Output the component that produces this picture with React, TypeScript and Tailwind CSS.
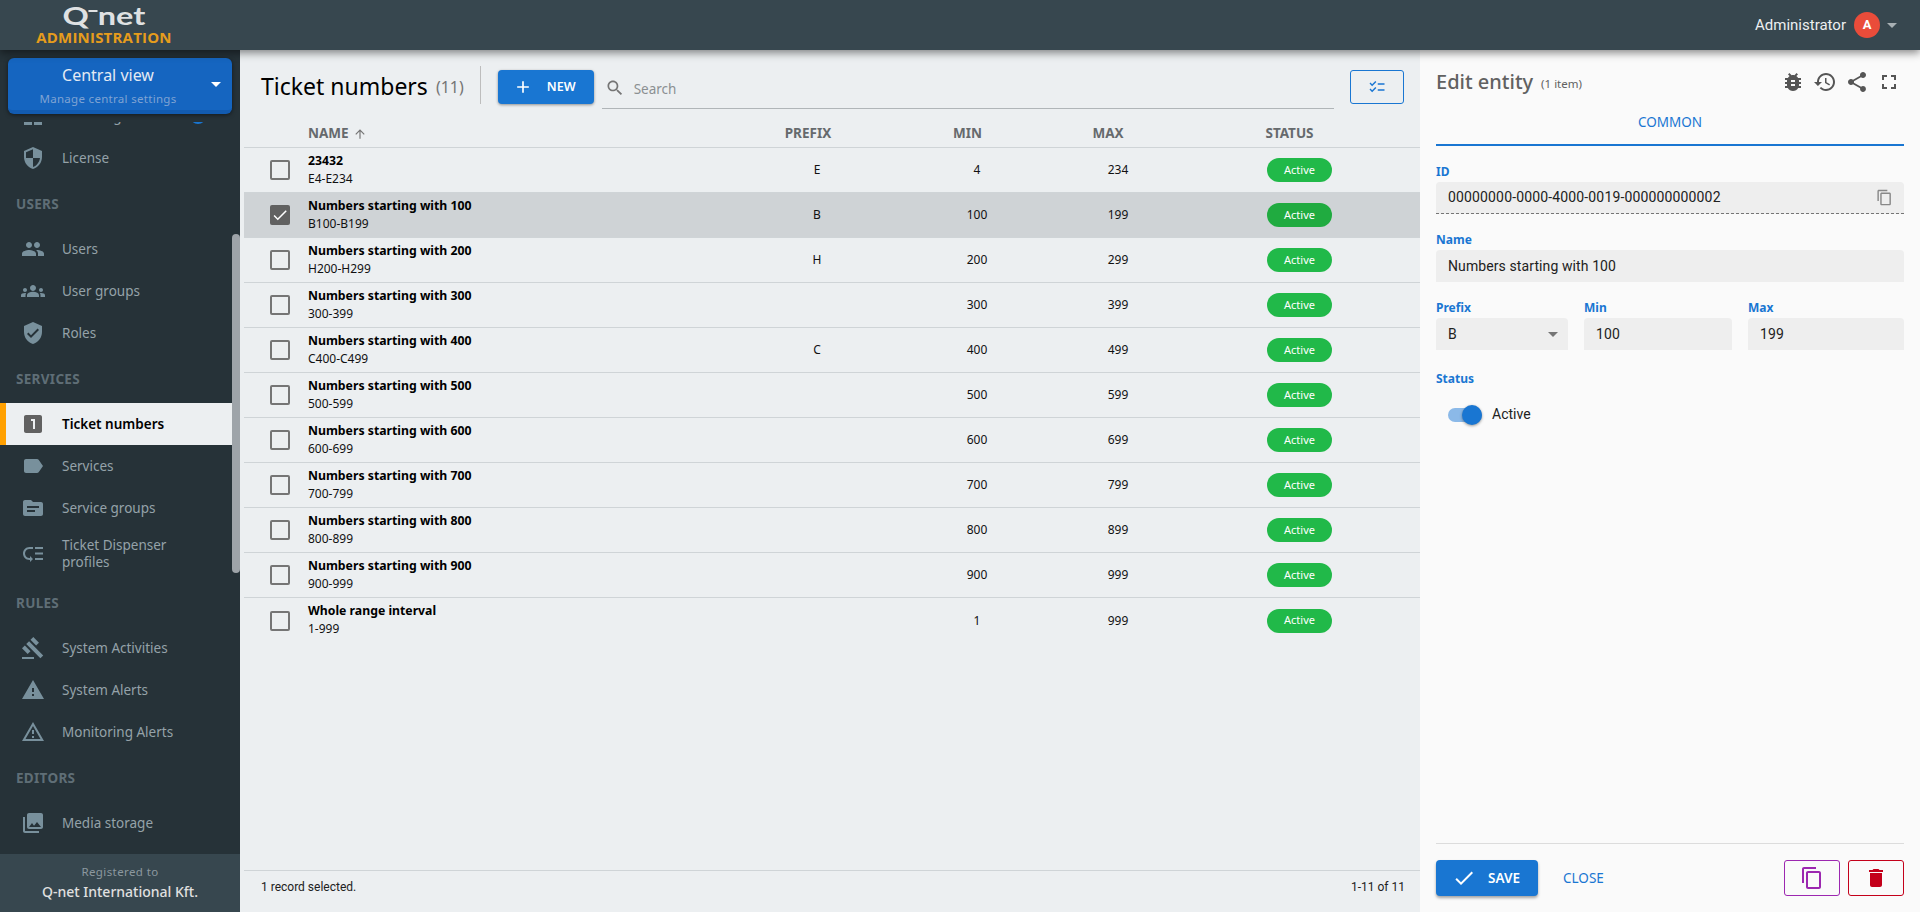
import React from 'react';

const ubuntu = "font-['Noto_Sans',sans-serif]";

const paths: Record<string, string> = {
  dashboard: 'M3 13h8V3H3v10zm0 8h8v-6H3v6zm10 0h8V11h-8v10zm0-18v6h8V3h-8z',
  security: 'M12 1L3 5v6c0 5.55 3.84 10.74 9 12 5.16-1.26 9-6.45 9-12V5l-9-4zm0 10.99h7c-.53 4.12-3.28 7.79-7 8.94V12H5V6.3l7-3.11v8.8z',
  people: 'M16 11c1.66 0 2.99-1.34 2.99-3S17.66 5 16 5c-1.66 0-3 1.34-3 3s1.34 3 3 3zm-8 0c1.66 0 2.99-1.34 2.99-3S9.66 5 8 5C6.34 5 5 6.34 5 8s1.34 3 3 3zm0 2c-2.33 0-7 1.17-7 3.5V19h14v-2.5c0-2.33-4.67-3.5-7-3.5zm8 0c-.29 0-.62.02-.97.05 1.16.84 1.97 1.97 1.97 3.45V19h6v-2.5c0-2.33-4.67-3.5-7-3.5z',
  groups: 'M12 12.75c1.63 0 3.07.39 4.24.9 1.08.48 1.76 1.56 1.76 2.73V18H6v-1.61c0-1.18.68-2.26 1.76-2.73 1.17-.52 2.61-.91 4.24-.91zM4 13c1.1 0 2-.9 2-2s-.9-2-2-2-2 .9-2 2 .9 2 2 2zm1.13 1.1c-.37-.06-.74-.1-1.13-.1-.99 0-1.93.21-2.78.58C.48 14.9 0 15.62 0 16.43V18h4.5v-1.61c0-.83.23-1.61.63-2.29zM20 13c1.1 0 2-.9 2-2s-.9-2-2-2-2 .9-2 2 .9 2 2 2zm4 3.43c0-.81-.48-1.53-1.22-1.85-.85-.37-1.79-.58-2.78-.58-.39 0-.76.04-1.13.1.4.68.63 1.46.63 2.29V18H24v-1.57zM12 6c1.66 0 3 1.34 3 3s-1.34 3-3 3-3-1.34-3-3 1.34-3 3-3z',
  verified: 'M12 1L3 5v6c0 5.55 3.84 10.74 9 12 5.16-1.26 9-6.45 9-12V5l-9-4zm-2 16l-4-4 1.41-1.41L10 14.17l6.59-6.59L18 9l-8 8z',
  looksOne: 'M19 3H5c-1.1 0-2 .9-2 2v14c0 1.1.9 2 2 2h14c1.1 0 2-.9 2-2V5c0-1.1-.9-2-2-2zm-5 14h-2V9h-2V7h4v10z',
  label: 'M17.63 5.84C17.27 5.33 16.67 5 16 5L5 5.01C3.9 5.01 3 5.9 3 7v10c0 1.1.9 1.99 2 1.99L16 19c.67 0 1.27-.33 1.63-.84L22 12l-4.37-6.16z',
  topic: 'M20 6h-8l-2-2H4c-1.1 0-1.99.9-1.99 2L2 18c0 1.1.9 2 2 2h16c1.1 0 2-.9 2-2V8c0-1.1-.9-2-2-2zm-6 10H6v-2h8v2zm4-4H6v-2h12v2z',
  lowPriority: 'M14 5h8v2h-8zm0 5.5h8v2h-8zm0 5.5h8v2h-8zM2 11.5C2 15.08 4.92 18 8.5 18H9v2l3-3-3-3v2h-.5C6.02 16 4 13.98 4 11.5S6.02 7 8.5 7H12V5H8.5C4.92 5 2 7.92 2 11.5z',
  gavel: 'M1 21h12v2H1zM5.245 8.07l2.83-2.827 14.14 14.142-2.828 2.828zM12.317 1l5.657 5.656-2.83 2.83-5.654-5.66zM3.825 9.485l5.657 5.657-2.828 2.828-5.657-5.657z',
  warning: 'M1 21h22L12 2 1 21zm12-3h-2v-2h2v2zm0-4h-2v-4h2v4z',
  warningOutline: 'M12 5.99L19.53 19H4.47L12 5.99M12 2L1 21h22L12 2zm1 14h-2v2h2v-2zm0-6h-2v4h2v-4z',
  collections: 'M22 16V4c0-1.1-.9-2-2-2H8c-1.1 0-2 .9-2 2v12c0 1.1.9 2 2 2h12c1.1 0 2-.9 2-2zm-11-4l2.03 2.71L16 11l4 5H8l3-4zM2 6v14c0 1.1.9 2 2 2h14v-2H4V6H2z',
  checklist: 'M22 7h-9v2h9V7zm0 8h-9v2h9v-2zM5.54 11L2 7.46l1.41-1.41 2.12 2.12 4.24-4.24 1.41 1.41L5.54 11zm0 8L2 15.46l1.41-1.41 2.12 2.12 4.24-4.24 1.41 1.41L5.54 19z',
  bug: 'M20 8h-2.81c-.45-.78-1.07-1.45-1.82-1.96L17 4.41 15.59 3l-2.17 2.17C12.96 5.06 12.49 5 12 5c-.49 0-.96.06-1.41.17L8.41 3 7 4.41l1.62 1.63C7.88 6.55 7.26 7.22 6.81 8H4v2h2.09c-.05.33-.09.66-.09 1v1H4v2h2v1c0 .34.04.67.09 1H4v2h2.81c1.04 1.79 2.97 3 5.19 3s4.15-1.21 5.19-3H20v-2h-2.09c.05-.33.09-.66.09-1v-1h2v-2h-2v-1c0-.34-.04-.67-.09-1H20V8zm-6 8h-4v-2h4v2zm0-4h-4v-2h4v2z',
  history: 'M13 3c-4.97 0-9 4.03-9 9H1l3.89 3.89.07.14L9 12H6c0-3.87 3.13-7 7-7s7 3.13 7 7-3.13 7-7 7c-1.93 0-3.68-.79-4.94-2.06l-1.42 1.42C8.27 19.99 10.51 21 13 21c4.97 0 9-4.03 9-9s-4.03-9-9-9zm-1 5v5l4.28 2.54.72-1.21-3.5-2.08V8H12z',
  share: 'M18 16.08c-.76 0-1.44.3-1.96.77L8.91 12.7c.05-.23.09-.46.09-.7s-.04-.47-.09-.7l7.05-4.11c.54.5 1.25.81 2.04.81 1.66 0 3-1.34 3-3s-1.34-3-3-3-3 1.34-3 3c0 .24.04.47.09.7L8.04 9.81C7.5 9.31 6.79 9 6 9c-1.66 0-3 1.34-3 3s1.34 3 3 3c.79 0 1.5-.31 2.04-.81l7.12 4.16c-.05.21-.08.43-.08.65 0 1.61 1.31 2.92 2.92 2.92 1.61 0 2.92-1.31 2.92-2.92s-1.31-2.92-2.92-2.92z',
  fullscreen: 'M7 14H5v5h5v-2H7v-3zm-2-4h2V7h3V5H5v5zm12 7h-3v2h5v-5h-2v3zM14 5v2h3v3h2V5h-5z',
  copy: 'M16 1H4c-1.1 0-2 .9-2 2v14h2V3h12V1zm3 4H8c-1.1 0-2 .9-2 2v14c0 1.1.9 2 2 2h11c1.1 0 2-.9 2-2V7c0-1.1-.9-2-2-2zm0 16H8V7h11v14z',
  trash: 'M6 19c0 1.1.9 2 2 2h8c1.1 0 2-.9 2-2V7H6v12zM19 4h-3.5l-1-1h-5l-1 1H5v2h14V4z',
  check: 'M9 16.17L4.83 12l-1.42 1.41L9 19 21 7l-1.41-1.41z',
  add: 'M19 13h-6v6h-2v-6H5v-2h6V5h2v6h6v2z',
  search: 'M15.5 14h-.79l-.28-.27C15.41 12.59 16 11.11 16 9.5 16 5.91 13.09 3 9.5 3S3 5.91 3 9.5 5.91 16 9.5 16c1.61 0 3.09-.59 4.23-1.57l.27.28v.79l5 4.99L20.49 19l-4.99-5zm-6 0C7.01 14 5 11.99 5 9.5S7.01 5 9.5 5 14 7.01 14 9.5 11.99 14 9.5 14z',
  arrowUp: 'M4 12l1.41 1.41L11 7.83V20h2V7.83l5.58 5.59L20 12l-8-8-8 8z',
};

const Icon: React.FC<{ name: string; className?: string }> = ({ name, className }) => (
  <svg viewBox="0 0 24 24" fill="currentColor" className={className}>
    <path d={paths[name]} />
  </svg>
);

type NavEntry =
  | { heading: string }
  | { label: string; icon: string; active?: boolean; tall?: boolean; badge?: boolean };

const navEntries: NavEntry[] = [
  { label: 'Licensing', icon: 'dashboard', badge: true },
  { label: 'License', icon: 'security' },
  { heading: 'USERS' },
  { label: 'Users', icon: 'people' },
  { label: 'User groups', icon: 'groups' },
  { label: 'Roles', icon: 'verified' },
  { heading: 'SERVICES' },
  { label: 'Ticket numbers', icon: 'looksOne', active: true },
  { label: 'Services', icon: 'label' },
  { label: 'Service groups', icon: 'topic' },
  { label: 'Ticket Dispenser profiles', icon: 'lowPriority', tall: true },
  { heading: 'RULES' },
  { label: 'System Activities', icon: 'gavel' },
  { label: 'System Alerts', icon: 'warning' },
  { label: 'Monitoring Alerts', icon: 'warningOutline' },
  { heading: 'EDITORS' },
  { label: 'Media storage', icon: 'collections' },
];

const rows = [
  { name: '23432', range: 'E4-E234', prefix: 'E', min: 4, max: 234 },
  { name: 'Numbers starting with 100', range: 'B100-B199', prefix: 'B', min: 100, max: 199, selected: true },
  { name: 'Numbers starting with 200', range: 'H200-H299', prefix: 'H', min: 200, max: 299 },
  { name: 'Numbers starting with 300', range: '300-399', prefix: '', min: 300, max: 399 },
  { name: 'Numbers starting with 400', range: 'C400-C499', prefix: 'C', min: 400, max: 499 },
  { name: 'Numbers starting with 500', range: '500-599', prefix: '', min: 500, max: 599 },
  { name: 'Numbers starting with 600', range: '600-699', prefix: '', min: 600, max: 699 },
  { name: 'Numbers starting with 700', range: '700-799', prefix: '', min: 700, max: 799 },
  { name: 'Numbers starting with 800', range: '800-899', prefix: '', min: 800, max: 899 },
  { name: 'Numbers starting with 900', range: '900-999', prefix: '', min: 900, max: 999 },
  { name: 'Whole range interval', range: '1-999', prefix: '', min: 1, max: 999 },
];

const Sidebar: React.FC = () => (
  <aside className="w-[240px] shrink-0 flex flex-col bg-[#263238]">
    <div className="relative z-10 px-2 pt-2 pb-2 bg-[#263238]">
      <div className="h-14 rounded-md bg-[#1565c0] border-b-4 border-[#125bb0] shadow-[0_1px_4px_rgba(0,0,0,0.5)] flex items-center relative">
        <div className="w-[200px] text-center">
          <div className="text-[16px] leading-5 text-[#e3eaf3] mt-[3px]">Central view</div>
          <div className="text-[11.5px] leading-4 text-[#7fa3d3] tracking-[0.3px] mt-[6px]">Manage central settings</div>
        </div>
        <div className="w-0 h-0 border-x-[5px] border-x-transparent border-t-[5px] border-t-white ml-[3px]" />
      </div>
    </div>
    <nav className="flex-1 overflow-hidden relative">
      <div className="-mt-[27px]">
        {navEntries.map((entry) => {
          if ('heading' in entry) {
            return (
              <div key={entry.heading} className="h-[49px] pl-4 pt-[2px] flex items-center text-[13.5px] font-bold text-[#5f6e76] tracking-[0.3px]">
                {entry.heading}
              </div>
            );
          }
          const height = entry.tall ? 'h-[49px]' : 'h-[42px]';
          const tone = entry.active
            ? 'bg-[#eceff1] text-black font-semibold border-l-[6px] border-[#ffa000] mr-2'
            : 'text-[#95a2a9] pl-[6px]';
          return (
            <div key={entry.label} className={`${height} ${tone} flex items-center relative`}>
              <span className={`w-[22px] ml-[16px] shrink-0 flex justify-center ${entry.active ? 'text-[#616161]' : 'text-[#78909c]'}`}>
                <Icon name={entry.icon} className="w-6 h-6 shrink-0" />
              </span>
              <span className="ml-[18px] text-[13.5px] leading-[17px] w-[120px] whitespace-normal">{entry.label}</span>
              {entry.badge && <span className="absolute left-[190px] top-[13px] w-4 h-4 rounded-full bg-[#1976d2]" />}
            </div>
          );
        })}
      </div>
      <div className="absolute right-0 top-[112px] w-2 h-[339px] rounded-md bg-[#9ea4a9]" />
    </nav>
    <div className="h-[58px] bg-[#37474f] text-center pt-[9px]">
      <div className="text-[11.5px] leading-[18px] text-[#8c989f] tracking-[0.4px]">Registered to</div>
      <div className="text-[14px] leading-[22px] font-medium text-[#e0e0e0]">Q-net International Kft.</div>
    </div>
  </aside>
);

const gridCols = 'grid grid-cols-[64px_452px_114px_206px_76px_1fr] items-center';

const Checkbox: React.FC<{ checked?: boolean }> = ({ checked }) =>
  checked ? (
    <div className="w-5 h-5 rounded-[2px] bg-[#616161] flex items-center justify-center text-white">
      <Icon name="check" className="w-[18px] h-[18px]" />
    </div>
  ) : (
    <div className="w-5 h-5 rounded-[2px] border-2 border-[#757575]" />
  );

const TicketTable: React.FC = () => (
  <div className="flex-1 min-h-0">
    <div className={`${gridCols} h-[39px] pt-[11px] border-b-[1.5px] border-[#cfd4d7] text-[13.5px] font-bold text-[#666a6d]`}>
      <div />
      <div className="flex items-center gap-1">
        NAME <Icon name="arrowUp" className="w-[14px] h-[14px] text-[#757575]" />
      </div>
      <div className="text-center pr-[18px]">PREFIX</div>
      <div className="text-center pr-[19px]">MIN</div>
      <div className="text-center pr-[20px]">MAX</div>
      <div className="text-center pl-[3px]">STATUS</div>
    </div>
    {rows.map((row, index) => (
      <div
        key={row.name}
        className={`${gridCols} h-[45px] text-[12px] text-[#111] ${index < 10 ? 'border-b-[1.5px] border-[#cfd4d7]' : ''} ${row.selected ? 'bg-[#cfd3d6]' : ''}`}
      >
        <div className="pl-[26px]">
          <Checkbox checked={row.selected} />
        </div>
        <div className="leading-[18px] -mt-[1px]">
          <div className="font-bold text-black text-[12.25px]">{row.name}</div>
          <div>{row.range}</div>
        </div>
        <div className="text-center">{row.prefix}</div>
        <div className="text-center">{row.min}</div>
        <div className="text-center">{row.max}</div>
        <div className="flex justify-center pl-[23px]">
          <span className={`w-[65px] h-6 rounded-full flex items-center justify-center text-[11px] text-white ${row.selected ? 'bg-[#20ab40]' : 'bg-[#21b949]'}`}>
            Active
          </span>
        </div>
      </div>
    ))}
  </div>
);

const MainPanel: React.FC = () => (
  <main className="flex-1 min-w-0 flex flex-col bg-[#eceff1] pl-1">
    <div className="h-[59px] flex items-start pt-[16px] pl-[17px] pr-4 shrink-0">
      <h1 className="text-[23px] leading-[40px] text-black whitespace-nowrap">Ticket numbers</h1>
      <span className="text-[16px] leading-[40px] text-[#757575] ml-2 mt-[1px]">(11)</span>
      <div className="w-px h-[38px] bg-[#bdbdbd] ml-4 mr-[17px]" />
      <button className="w-24 h-[34px] mt-1 rounded bg-[#1976d2] text-white text-[12.5px] font-semibold shadow-[0_1px_3px_rgba(0,0,0,0.4)] flex items-center pl-[15px]">
        <Icon name="add" className="w-5 h-5" />
        <span className="ml-[14px]">NEW</span>
      </button>
      <div className="w-[733px] h-[39px] ml-2 mt-1 border-b-[1.5px] border-[#b0b5b8] flex items-center pl-[3px] text-[#757575]">
        <Icon name="search" className="w-[20px] h-[20px] -mt-[2px]" />
        <span className="ml-[9px] mt-[1px] text-[13.5px] text-[#8b8f92]">Search</span>
      </div>
      <button className="w-[54px] h-[34px] mt-1 ml-4 rounded-[3px] border border-[#1976d2] text-[#1976d2] flex items-center justify-center">
        <Icon name="checklist" className="w-[18px] h-[18px]" />
      </button>
    </div>
    <TicketTable />
    <div className="h-[42px] shrink-0 border-t-[1.5px] border-[#cfd4d7] flex items-center justify-between pl-[17px] pr-[15px] pb-[9px] text-[12px] text-[#212121] font-['Roboto',sans-serif]">
      <span>1 record selected.</span>
      <span>1-11 of 11</span>
    </div>
  </main>
);

const FieldLabel: React.FC<{ children: React.ReactNode }> = ({ children }) => (
  <div className="text-[12px] leading-4 font-bold text-[#1976d2] mb-[2px]">{children}</div>
);

const Field: React.FC<{ label: string; value: string; className?: string; caret?: boolean }> = ({ label, value, className, caret }) => (
  <div className={className}>
    <FieldLabel>{label}</FieldLabel>
    <div className="h-8 rounded-t-[4px] bg-[#eeeeee] px-3 flex items-center justify-between text-[14px] text-[#212121] font-['Roboto',sans-serif] tracking-[0.1px]">
      {value}
      {caret && <span className="w-0 h-0 border-x-[5px] border-x-transparent border-t-[5px] border-t-[#757575] mr-[-2px]" />}
    </div>
  </div>
);

const EditPanel: React.FC = () => (
  <section className="w-[500px] shrink-0 bg-[#fafafa] flex flex-col px-4">
    <div className="h-[54px] shrink-0 flex items-center pt-[10px]">
      <span className="text-[20px] text-[#616161] font-medium">Edit entity</span>
      <span className="text-[11.5px] text-[#616161] ml-2 mt-[3px]">(1 item)</span>
      <div className="ml-auto flex gap-2 text-[#555] mr-[3px]">
        <Icon name="bug" className="w-6 h-6" />
        <Icon name="history" className="w-6 h-6" />
        <Icon name="share" className="w-6 h-6" />
        <Icon name="fullscreen" className="w-6 h-6" />
      </div>
    </div>
    <div className="h-[42px] shrink-0 border-b-2 border-[#1976d2] text-center text-[13.5px] leading-[36px] text-[#1976d2]">COMMON</div>
    <div className="flex-1 pt-[18px]">
      <FieldLabel>ID</FieldLabel>
      <div className="h-8 rounded-t-[4px] bg-[#eeeeee] border-b border-dashed border-[#757575] px-3 flex items-center justify-between text-[14px] text-[#212121] font-['Roboto',sans-serif] tracking-[0.15px]">
        00000000-0000-4000-0019-000000000002
        <Icon name="copy" className="w-[17px] h-[17px] text-[#888] -mr-[1px]" />
      </div>
      <Field label="Name" value="Numbers starting with 100" className="mt-[18px]" />
      <div className="flex gap-4 mt-[18px]">
        <Field label="Prefix" value="B" caret className="w-[132px]" />
        <Field label="Min" value="100" className="w-[148px]" />
        <Field label="Max" value="199" className="w-[156px]" />
      </div>
      <div className="mt-[21px]">
        <FieldLabel>Status</FieldLabel>
        <div className="flex items-center pl-3 mt-[17px]">
          <div className="relative w-[34px] h-[14px] rounded-full bg-[#8bb9e8]">
            <span className="absolute right-0 -top-[3px] w-5 h-5 rounded-full bg-[#1976d2] shadow-[0_1px_3px_rgba(0,0,0,0.4)]" />
          </div>
          <span className="ml-[10px] text-[14px] text-[#212121] font-['Roboto',sans-serif]">Active</span>
        </div>
      </div>
    </div>
    <div className="h-[69px] shrink-0 border-t border-[#dcdcdc] flex items-start pt-4">
      <button className="w-[102px] h-9 rounded bg-[#1976d2] text-white text-[13.5px] font-semibold shadow-[0_2px_3px_rgba(0,0,0,0.35)] flex items-center pl-4">
        <Icon name="check" className="w-6 h-6" />
        <span className="ml-[12px]">SAVE</span>
      </button>
      <span className="ml-[25px] h-9 flex items-center text-[13.5px] text-[#1976d2]">CLOSE</span>
      <button className="ml-auto w-14 h-9 rounded-[3px] border border-[#9c27b0] text-[#9c27b0] flex items-center justify-center">
        <Icon name="copy" className="w-6 h-6" />
      </button>
      <button className="ml-2 w-14 h-9 rounded-[3px] border border-[#c4001a] text-[#c4001a] flex items-center justify-center">
        <Icon name="trash" className="w-6 h-6" />
      </button>
    </div>
  </section>
);

const App: React.FC = () => (
  <div className={`h-screen flex flex-col overflow-hidden ${ubuntu}`}>
    <header className="h-[50px] shrink-0 relative z-20 bg-[#37474f] shadow-[0_3px_8px_rgba(0,0,0,0.45)] flex items-start justify-between">
      <div className="w-[208px] flex flex-col items-center">
        <div className="h-[28px] pt-[1px] flex items-center scale-x-[1.3] text-[25px] leading-[28px] font-bold text-[#dfe1e2] font-['Lato',sans-serif]">
          <span>Q</span>
          <span className="w-[7px] h-[2px] bg-[#dfe1e2] -mt-[7px]" />
          <span>net</span>
        </div>
        <div className="text-[15px] leading-[19px] font-bold text-[#e69c1c] tracking-[0.2px] font-['Open_Sans',sans-serif]">ADMINISTRATION</div>
      </div>
      <div className="h-[50px] flex items-center pr-[23px] font-['Roboto',sans-serif]">
        <span className="text-[15px] text-[#eceff1]">Administrator</span>
        <span className="ml-2 w-[26px] h-[26px] rounded-full bg-[#ea4c3a] text-white text-[13px] font-bold flex items-center justify-center">A</span>
        <span className="ml-[7px] w-0 h-0 border-x-[5px] border-x-transparent border-t-[5px] border-t-[#a8b0b4]" />
      </div>
    </header>
    <div className="flex-1 min-h-0 flex">
      <Sidebar />
      <MainPanel />
      <EditPanel />
    </div>
  </div>
);

export default App;
